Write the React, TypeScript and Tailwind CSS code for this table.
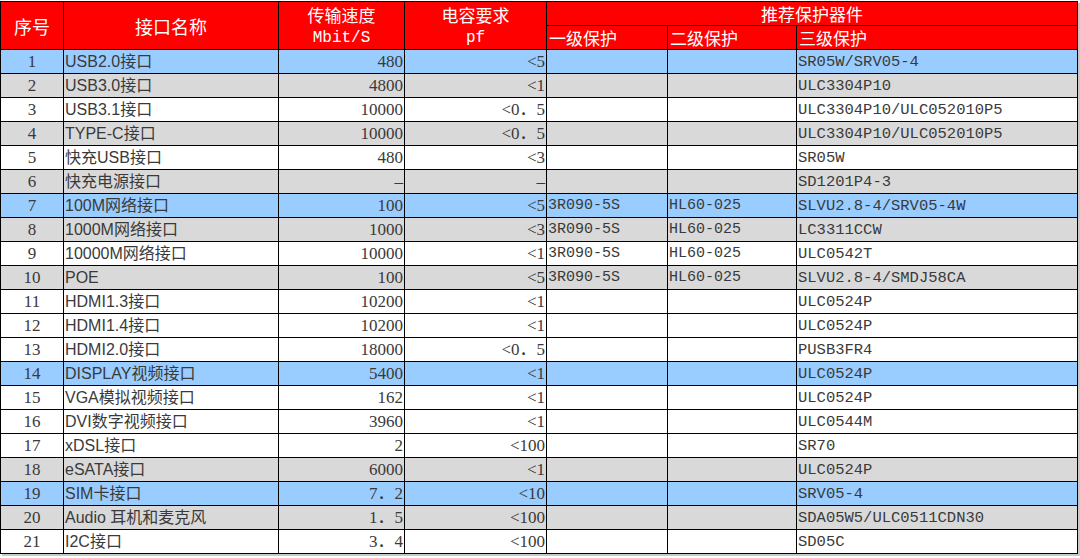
type Tone = "blue" | "grey" | "white";

interface Row {
  no: number;
  name: string;
  speed: string;
  cap: string;
  p1?: string;
  p2?: string;
  p3: string;
  tone: Tone;
}

const rows: Row[] = [
  { no: 1, name: "USB2.0接口", speed: "480", cap: "<5", p3: "SR05W/SRV05-4", tone: "blue" },
  { no: 2, name: "USB3.0接口", speed: "4800", cap: "<1", p3: "ULC3304P10", tone: "grey" },
  { no: 3, name: "USB3.1接口", speed: "10000", cap: "<0．5", p3: "ULC3304P10/ULC052010P5", tone: "white" },
  { no: 4, name: "TYPE-C接口", speed: "10000", cap: "<0．5", p3: "ULC3304P10/ULC052010P5", tone: "grey" },
  { no: 5, name: "快充USB接口", speed: "480", cap: "<3", p3: "SR05W", tone: "white" },
  { no: 6, name: "快充电源接口", speed: "–", cap: "–", p3: "SD1201P4-3", tone: "grey" },
  { no: 7, name: "100M网络接口", speed: "100", cap: "<5", p1: "3R090-5S", p2: "HL60-025", p3: "SLVU2.8-4/SRV05-4W", tone: "blue" },
  { no: 8, name: "1000M网络接口", speed: "1000", cap: "<3", p1: "3R090-5S", p2: "HL60-025", p3: "LC3311CCW", tone: "grey" },
  { no: 9, name: "10000M网络接口", speed: "10000", cap: "<1", p1: "3R090-5S", p2: "HL60-025", p3: "ULC0542T", tone: "white" },
  { no: 10, name: "POE", speed: "100", cap: "<5", p1: "3R090-5S", p2: "HL60-025", p3: "SLVU2.8-4/SMDJ58CA", tone: "grey" },
  { no: 11, name: "HDMI1.3接口", speed: "10200", cap: "<1", p3: "ULC0524P", tone: "white" },
  { no: 12, name: "HDMI1.4接口", speed: "10200", cap: "<1", p3: "ULC0524P", tone: "white" },
  { no: 13, name: "HDMI2.0接口", speed: "18000", cap: "<0．5", p3: "PUSB3FR4", tone: "white" },
  { no: 14, name: "DISPLAY视频接口", speed: "5400", cap: "<1", p3: "ULC0524P", tone: "blue" },
  { no: 15, name: "VGA模拟视频接口", speed: "162", cap: "<1", p3: "ULC0524P", tone: "white" },
  { no: 16, name: "DVI数字视频接口", speed: "3960", cap: "<1", p3: "ULC0544M", tone: "white" },
  { no: 17, name: "xDSL接口", speed: "2", cap: "<100", p3: "SR70", tone: "white" },
  { no: 18, name: "eSATA接口", speed: "6000", cap: "<1", p3: "ULC0524P", tone: "grey" },
  { no: 19, name: "SIM卡接口", speed: "7．2", cap: "<10", p3: "SRV05-4", tone: "blue" },
  { no: 20, name: "Audio 耳机和麦克风", speed: "1．5", cap: "<100", p3: "SDA05W5/ULC0511CDN30", tone: "grey" },
  { no: 21, name: "I2C接口", speed: "3．4", cap: "<100", p3: "SD05C", tone: "white" },
];

const toneBg: Record<Tone, string> = {
  blue: "bg-[#99ccff]",
  grey: "bg-[#d9d9d9]",
  white: "bg-white",
};

const serif = "font-['Liberation_Serif','Noto_Sans_CJK_SC',serif]";
const sans = "font-['Liberation_Sans','Noto_Sans_CJK_SC',sans-serif]";
const mono = "font-['Liberation_Mono','Noto_Sans_CJK_SC',monospace]";
const cjk = "font-['Noto_Sans_CJK_SC',sans-serif]";

const cell = "border border-black p-0 h-[24px] leading-[22px] whitespace-nowrap overflow-visible";

export default function App() {
  return (
    <div className="w-[1080px] h-[558px] bg-white pt-[1px] overflow-hidden">
      <table className="table-fixed border-collapse w-[1077px] text-[#3a3a3a] shadow-[2px_2px_0_#c8c8c8]">
        <colgroup>
          <col className="w-[63px]" />
          <col className="w-[215px]" />
          <col className="w-[126px]" />
          <col className="w-[142px]" />
          <col className="w-[121px]" />
          <col className="w-[129px]" />
          <col className="w-[281px]" />
        </colgroup>
        <thead className="bg-[#ff0000] text-white font-normal">
          <tr>
            <th rowSpan={2} className={`${cell} ${cjk} text-[18px] font-normal text-center`}>
              序号
            </th>
            <th rowSpan={2} className={`${cell} ${cjk} text-[18px] font-normal text-center`}>
              接口名称
            </th>
            <th rowSpan={2} className={`${cell} font-normal text-center`}>
              <div className={`${cjk} text-[17px] leading-[24px]`}>传输速度</div>
              <div className={`${mono} text-[16px] leading-[22px]`}>Mbit/S</div>
            </th>
            <th rowSpan={2} className={`${cell} font-normal text-center`}>
              <div className={`${cjk} text-[17px] leading-[24px]`}>电容要求</div>
              <div className={`${mono} text-[16px] leading-[22px]`}>pf</div>
            </th>
            <th colSpan={3} className={`${cell} ${cjk} text-[17px] font-normal text-center`}>
              推荐保护器件
            </th>
          </tr>
          <tr>
            <th className={`${cell} ${cjk} text-[17px] font-normal text-left pl-[2px]`}>一级保护</th>
            <th className={`${cell} ${cjk} text-[17px] font-normal text-left pl-[2px]`}>二级保护</th>
            <th className={`${cell} ${cjk} text-[17px] font-normal text-left pl-[2px]`}>三级保护</th>
          </tr>
        </thead>
        <tbody>
          {rows.map((r) => (
            <tr key={r.no} className={toneBg[r.tone]}>
              <td className={`${cell} ${serif} text-[17px] text-center`}>{r.no}</td>
              <td className={`${cell} ${sans} text-[16px] text-left pl-[1px]`}>{r.name}</td>
              <td className={`${cell} ${serif} text-[17px] text-right pr-[1px]`}>{r.speed}</td>
              <td className={`${cell} ${serif} text-[17px] text-right pr-[1px]`}>{r.cap}</td>
              <td className={`${cell} ${mono} text-[15px] text-left pl-[1px]`}>{r.p1 ?? ""}</td>
              <td className={`${cell} ${mono} text-[15px] text-left pl-[1px]`}>{r.p2 ?? ""}</td>
              <td className={`${cell} ${mono} text-[15.5px] text-left pl-[1px]`}>{r.p3}</td>
            </tr>
          ))}
        </tbody>
      </table>
    </div>
  );
}
